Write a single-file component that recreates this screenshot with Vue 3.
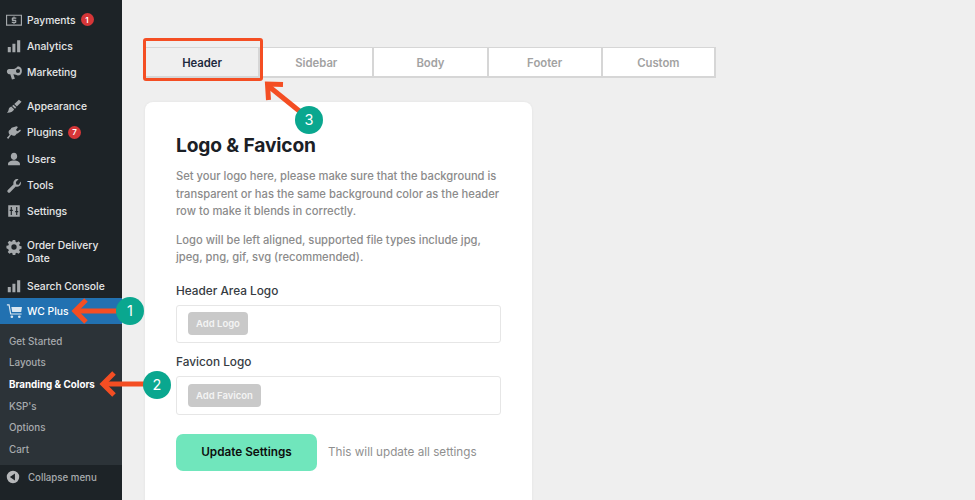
<script setup>
const groupA = [
  { id: 'payments', label: 'Payments', badge: 1 },
  { id: 'analytics', label: 'Analytics' },
  { id: 'marketing', label: 'Marketing' }
]
const groupB = [
  { id: 'appearance', label: 'Appearance' },
  { id: 'plugins', label: 'Plugins', badge: 7 },
  { id: 'users', label: 'Users' },
  { id: 'tools', label: 'Tools' },
  { id: 'settings', label: 'Settings' }
]
const sub = ['Get Started', 'Layouts', 'Branding & Colors', "KSP's", 'Options', 'Cart']
const tabs = ['Header', 'Sidebar', 'Body', 'Footer', 'Custom']
const icons = {
  payments: 'M0 3h18v12.500H0zM1.300 4.300v9.900h15.400V4.300zM9.600 5v1.300h2v1.300H8.300v1.100h2.200c.7 0 1.100.5 1.100 1.100v1.500c0 .6-.4 1.100-1.100 1.100h-.9v1.100H8.400v-1.100H6.500v-1.300h3.800v-1.100H7.600c-.6 0-1.100-.5-1.100-1.100V7.400c0-.7.5-1.100 1.100-1.100h.8V5z',
  analytics: 'M2 10h3.400v6H2zM7.200 6.500h3.400V16H7.200zM12.500 2.500H16V16h-3.500z',
  marketing: 'M13.300 2.500A5.300 5.300 0 0 1 13.300 13c-1.500-.8-3-1.300-5-1.500l1.700 5-3.300 1-1.900-6.100H3.500C2.100 11.400 1 10.200 1 8.500s1.100-2.900 2.500-2.900H8.500c2-.3 3.500-1.800 4.800-3.100zM13.500 5.500a2.300 2.300 0 1 0 0 4.700 2.300 2.300 0 0 0 0-4.700z',
  appearance: 'M14.500 2l3 2.200-5.300 5.300-2.900-2.700zM8.500 7.500l3 2.800-1.300 1.700-3.400-3zM5.900 9.700l3.200 3c-.6 2.300-3.800 4-8.100 3.800 1.800-1.300 1.800-3 2.200-4.300.3-1.200 1.500-2 2.700-2.500z',
  plugins: 'M11.800 2.500l1.600 1-2.200 3.200 1.700 1.500 3-2 .9 1.500-3 2.300c-.4.400-1 .6-1.500.7l-1.700 2c-1 1-3.300.8-4.800-.5L2.500 17 1 15.500l3.200-3.300c-1.300-1.500-1.700-3.800-.7-4.800l2-1.800c.1-.6.400-1.200.9-1.500z',
  users: 'M9 2c2.200 0 3.600 1.800 3.600 4S11.200 10 9 10 5.400 8.200 5.400 6 6.800 2 9 2zM9 10.800c3.800 0 6.700 1.600 6.700 3.500V16H2.300v-1.700c0-1.900 2.900-3.500 6.700-3.500z',
  tools: 'M16.600 5.100c.6 1.900.1 3.600-1.200 4.800-1.200 1.100-2.900 1.400-4.400.9l-6.300 6.400c-.8.800-1.900.8-2.600 0-.8-.8-.8-1.900 0-2.700l6.400-6.300c-.5-1.500-.2-3.200.9-4.400 1.200-1.300 3-1.800 4.700-1.200l-3 3 .5 2.700 2.700.5z',
  settings: 'M2.500 2.500h13v13h-13zM5.300 4.500v3H4.200v1.400h1.100v4.600h1.300V8.900h1.100V7.500H6.600v-3zM11.400 4.500V9h-1.100v1.400h1.100v3.100h1.300v-3.100h1.100V9h-1.100V4.500z',
  gear: 'M7.600 1h2.800l.4 2.200 1.400.6 1.900-1.300 2 2-1.300 1.900.6 1.400 2.100.4v2.800l-2.100.4-.6 1.400 1.300 1.900-2 2-1.900-1.300-1.400.6-.4 2.100H7.600l-.4-2.100-1.400-.6-1.900 1.300-2-2 1.300-1.900-.6-1.400L.5 10.400V7.600l2.100-.4.6-1.400-1.300-1.900 2-2 1.900 1.300 1.400-.6zM9 6a3 3 0 100 6 3 3 0 000-6z',
  cart: 'M1 1.500h3l1.800 10.200H17.500v1.300H4.700L2.900 2.800H1zM6 4.500h12l-.9 5.700H7zM6.600 14a1.500 1.500 0 1 1 0 3 1.500 1.500 0 0 1 0-3zM15 14a1.500 1.500 0 1 1 0 3 1.500 1.500 0 0 1 0-3z',
  collapse: 'M9 1a8 8 0 110 16A8 8 0 019 1zm2.500 3.500L5 9l6.500 4.500z'
}
</script>

<template>
  <div class="page">
    <aside class="side">
      <nav class="group first">
        <a v-for="item in groupA" :key="item.id" class="item">
          <svg class="ico" viewBox="0 0 18 18"><path :d="icons[item.id]" fill-rule="evenodd" /></svg>
          <span>{{ item.label }}</span>
          <b v-if="item.badge" class="badge">{{ item.badge }}</b>
        </a>
      </nav>
      <nav class="group">
        <a v-for="item in groupB" :key="item.id" class="item">
          <svg class="ico" viewBox="0 0 18 18"><path :d="icons[item.id]" fill-rule="evenodd" /></svg>
          <span>{{ item.label }}</span>
          <b v-if="item.badge" class="badge">{{ item.badge }}</b>
        </a>
      </nav>
      <a class="item tall">
        <svg class="ico" viewBox="0 0 18 18"><path :d="icons.gear" fill-rule="evenodd" /></svg>
        <span>Order Delivery<br />Date</span>
      </a>
      <a class="item search">
        <svg class="ico" viewBox="0 0 18 18"><path :d="icons.analytics" /></svg>
        <span>Search Console</span>
      </a>
      <a class="item active">
        <svg class="ico" viewBox="0 0 18 18"><path :d="icons.cart" fill-rule="evenodd" /></svg>
        <span>WC Plus</span>
      </a>
      <ul class="sub">
        <li v-for="s in sub" :key="s" :class="{ cur: s === 'Branding & Colors' }">{{ s }}</li>
      </ul>
      <a class="collapse">
        <svg class="ico" viewBox="0 0 18 18"><path :d="icons.collapse" fill-rule="evenodd" /></svg>
        <span>Collapse menu</span>
      </a>
    </aside>

    <main class="main">
      <div class="tabs">
        <div v-for="(t, i) in tabs" :key="t" class="tab" :class="{ on: i === 0 }">{{ t }}</div>
      </div>
      <section class="card">
        <h1>Logo &amp; Favicon</h1>
        <p>Set your logo here, please make sure that the background is transparent or has the same background color as the header row to make it blends in correctly.</p>
        <p class="p2">Logo will be left aligned, supported file types include jpg, jpeg, png, gif, svg (recommended).</p>
        <h2>Header Area Logo</h2>
        <div class="box"><button class="add">Add Logo</button></div>
        <h2 class="second">Favicon Logo</h2>
        <div class="box"><button class="add">Add Favicon</button></div>
        <div class="actions">
          <button class="update">Update Settings</button>
          <span class="hint">This will update all settings</span>
        </div>
      </section>
    </main>

    <div class="frame"></div>
    <svg class="arrows" width="975" height="500" viewBox="0 0 975 500">
      <g fill="none" stroke="#f44e23" stroke-width="5">
        <path d="M120 311H78" />
        <path d="M86 300l-11 11 11 11" />
        <path d="M146 384H104" />
        <path d="M114 373l-11 11 11 11" />
        <path d="M303 114L269 86.500" />
        <path d="M283 84.500l-15.500-.5 1 16" />
      </g>
    </svg>
    <span class="step s1">1</span>
    <span class="step s2">2</span>
    <span class="step s3">3</span>
  </div>
</template>

<style>
html, body { margin: 0; background: #f0f0f1; overflow: hidden; }
</style>

<style scoped>
.page {
  position: relative;
  display: flex;
  width: 975px;
  height: 500px;
  overflow: hidden;
  background: #efefef;
  font-family: Inter, "Liberation Sans", sans-serif;
}
.side {
  width: 122px;
  flex: none;
  height: 500px;
  display: flex;
  flex-direction: column;
  background: #1d2327;
  color: #e6e7e8;
  font-size: 10.300px;
  font-weight: 500;
}
.group { display: flex; flex-direction: column; margin-bottom: 8px; }
.group.first { padding-top: 6.500px; }
.item {
  display: flex;
  align-items: center;
  height: 26.200px;
  padding-left: 6px;
  box-sizing: border-box;
  white-space: nowrap;
}
.tall {
  height: 41.200px;
  align-items: flex-start;
  line-height: 13.500px;
  padding-top: 6.500px;
}
.ico { width: 16px; height: 16px; margin-right: 5px; flex: none; fill: #a4a8ab; }
.search { height: 25.200px; }
.active { background: #2271b1; color: #fff; height: 26px; }
.active .ico { fill: #dbe7f1; }
.badge {
  display: inline-flex;
  align-items: center;
  justify-content: center;
  width: 13px;
  height: 13px;
  margin-left: 5px;
  border-radius: 50%;
  background: #d63638;
  color: #fff;
  font-size: 8px;
  font-weight: 600;
}
.sub {
  list-style: none;
  margin: 0;
  padding: 6.500px 0 5px 9px;
  background: #2c3338;
  color: #a8abae;
  font-size: 9.800px;
  height: 140.500px;
  box-sizing: border-box;
}
.sub li { height: 21.600px; line-height: 21.600px; white-space: nowrap; }
.sub li.cur { color: #fff; font-weight: 700; }
.collapse {
  display: flex;
  align-items: center;
  flex: 1;
  padding-left: 6px;
  padding-bottom: 10px;
  color: #a8abae;
  font-size: 9.700px;
}
.collapse .ico { width: 14px; height: 14px; margin-right: 8px; fill: #b5b7b9; }

.main { flex: 1; min-width: 0; padding: 47px 0 0 23px; }
.tabs { display: flex; width: 571px; }
.tab {
  width: 114.200px;
  height: 31px;
  box-sizing: border-box;
  display: flex;
  align-items: center;
  justify-content: center;
  padding-top: 1px;
  background: #fff;
  border: 1px solid #d6d6d6;
  border-width: 1.500px 1px 2px 1px;
  color: #a2a2a2;
  font-size: 11.300px;
  font-weight: 600;
}
.tab:last-child { border-right-width: 2px; }
.tab.on { background: #efefef; color: #1d2a3d; }
.card {
  margin-top: 24px;
  width: 387px;
  height: 420px;
  box-sizing: border-box;
  padding: 31px 31px 0;
  background: #fff;
  border-radius: 8px;
  box-shadow: 0 0 3px rgba(0, 0, 0, .06);
}
h1 {
  margin: 0 0 10px;
  font-size: 19.200px;
  line-height: 25px;
  font-weight: 700;
  color: #1b2026;
  letter-spacing: -.15px;
}
p {
  margin: 0;
  width: 326px;
  font-size: 11.200px;
  line-height: 17.500px;
  font-weight: 500;
  color: #8b8b8b;
}
.p2 { margin-top: 11px; }
h2 {
  margin: 17px 0 6px;
  font-size: 11.800px;
  line-height: 15px;
  font-weight: 500;
  color: #363b42;
}
h2.second { margin-top: 12px; margin-bottom: 6px; }
.box {
  width: 325px;
  height: 38.500px;
  box-sizing: border-box;
  display: flex;
  align-items: center;
  padding-left: 11px;
  border: 1px solid #e6e6e6;
  border-radius: 3px;
}
.add {
  height: 23px;
  padding: 0 8px;
  border: 0;
  border-radius: 4px;
  background: #c9c9c9;
  color: #f4f4f4;
  font: 600 9.500px Inter, "Liberation Sans", sans-serif;
}
.actions { display: flex; align-items: center; gap: 11px; margin-top: 19.500px; }
.update {
  width: 141px;
  height: 36.500px;
  border: 0;
  border-radius: 7px;
  background: #70e6bc;
  color: #0d0f0e;
  font: 600 11.750px Inter, "Liberation Sans", sans-serif;
}
.hint { color: #8f8f8f; font-size: 11.700px; }

.frame {
  position: absolute;
  left: 143px;
  top: 38px;
  width: 120px;
  height: 43px;
  box-sizing: border-box;
  border: 3.500px solid #f44e23;
  border-radius: 3px;
}
.arrows { position: absolute; left: 0; top: 0; pointer-events: none; }
.step {
  position: absolute;
  width: 28px;
  height: 28px;
  border-radius: 50%;
  background: #0aa78f;
  color: #fff;
  font-size: 14.500px;
  line-height: 28px;
  text-align: center;
}
.s1 { left: 116px; top: 297px; }
.s2 { left: 143px; top: 371px; }
.s3 { left: 295px; top: 106px; }
</style>
